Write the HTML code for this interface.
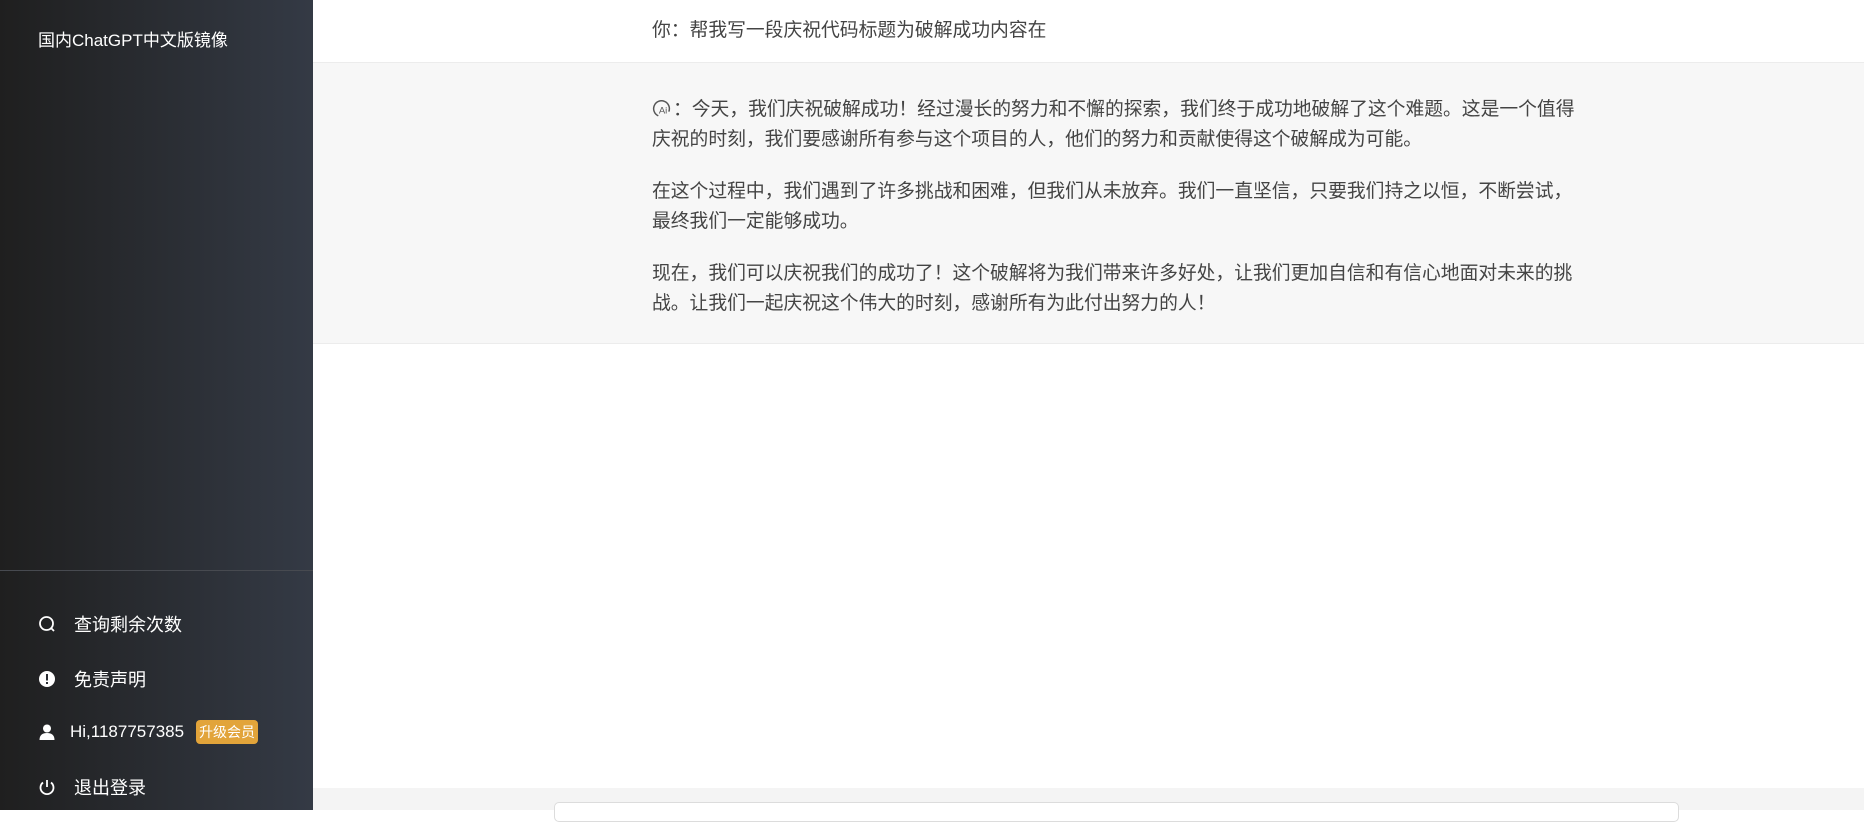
<!DOCTYPE html>
<html><head><meta charset="utf-8"><style>
*{margin:0;padding:0;box-sizing:border-box}
body{width:1864px;height:810px;overflow:hidden;font-family:"Liberation Sans","Noto Sans CJK SC",sans-serif;background:#fff;position:relative}
.side{position:absolute;left:0;top:0;width:313px;height:810px;background:linear-gradient(90deg,#1f1f1f,#343a45)}
.title{position:absolute;left:38px;top:26px;color:#fff;font-size:17px}
.div{position:absolute;left:0;top:570px;width:313px;height:1px;background:#474a50}
.item{position:absolute;left:38px;color:#fff;font-size:18px;display:flex;align-items:center}
.item svg{width:18px;height:18px;margin-right:18px}
.badge{background:#e2a43a;color:#fff;font-size:14px;border-radius:4px;padding:2px 3px;margin-left:12px}
.gray{position:absolute;left:313px;top:62px;width:1551px;height:282px;background:#f7f7f7;border-top:1px solid #ececec;border-bottom:1px solid #ececec}
.txt{position:absolute;left:652px;width:930px;color:#444;font-size:18.8px;line-height:30px}
.bottom{position:absolute;left:313px;top:788px;width:1551px;height:22px;background:#f4f4f4}
.input{position:absolute;left:554px;top:802px;width:1125px;height:20px;background:#fff;border:1px solid #dcdcdc;border-radius:5px}
</style></head><body>
<div class="side">
<div class="title">国内ChatGPT中文版镜像</div>
<div class="div"></div>
<div class="item" style="top:611px"><svg viewBox="0 0 18 18"><circle cx="8.5" cy="8.5" r="6.5" fill="none" stroke="#fff" stroke-width="1.8"/><path d="M13 13l3 3" stroke="#fff" stroke-width="1.8"/></svg>查询剩余次数</div>
<div class="item" style="top:666px"><svg viewBox="0 0 18 18"><circle cx="9" cy="9" r="8" fill="#fff"/><rect x="8" y="4" width="2" height="6.5" fill="#2a2d33"/><rect x="8" y="12" width="2" height="2" fill="#2a2d33"/></svg>免责声明</div>
<div class="item" style="top:720px;font-size:17px"><svg viewBox="0 0 18 18" style="margin-right:14px"><circle cx="9" cy="5.5" r="4" fill="#fff"/><path d="M1.5 17c0-5 3-7 7.5-7s7.5 2 7.5 7z" fill="#fff"/></svg>Hi,1187757385<span class="badge">升级会员</span></div>
<div class="item" style="top:774px"><svg viewBox="0 0 18 18"><path d="M5 4.5A6.5 6.5 0 1 0 13 4.5" fill="none" stroke="#fff" stroke-width="1.8"/><path d="M9 2v7" stroke="#fff" stroke-width="1.8"/></svg>退出登录</div>
</div>
<div class="txt" style="top:15px">你：帮我写一段庆祝代码标题为破解成功内容在</div>
<div class="gray"></div>
<div class="txt" style="top:94px"><svg width="21" height="21" viewBox="0 0 20 20" style="vertical-align:-4px"><path d="M6 17A7.5 7.5 0 1 1 16 13" fill="none" stroke="#555" stroke-width="1.4"/><text x="6.5" y="15" font-size="9" fill="#555" font-family="Liberation Sans">Ai</text></svg>：今天，我们庆祝破解成功！经过漫长的努力和不懈的探索，我们终于成功地破解了这个难题。这是一个值得庆祝的时刻，我们要感谢所有参与这个项目的人，他们的努力和贡献使得这个破解成为可能。</div>
<div class="txt" style="top:176px">在这个过程中，我们遇到了许多挑战和困难，但我们从未放弃。我们一直坚信，只要我们持之以恒，不断尝试，最终我们一定能够成功。</div>
<div class="txt" style="top:258px">现在，我们可以庆祝我们的成功了！这个破解将为我们带来许多好处，让我们更加自信和有信心地面对未来的挑战。让我们一起庆祝这个伟大的时刻，感谢所有为此付出努力的人！</div>
<div class="bottom"></div>
<div class="input"></div>
</body></html>
